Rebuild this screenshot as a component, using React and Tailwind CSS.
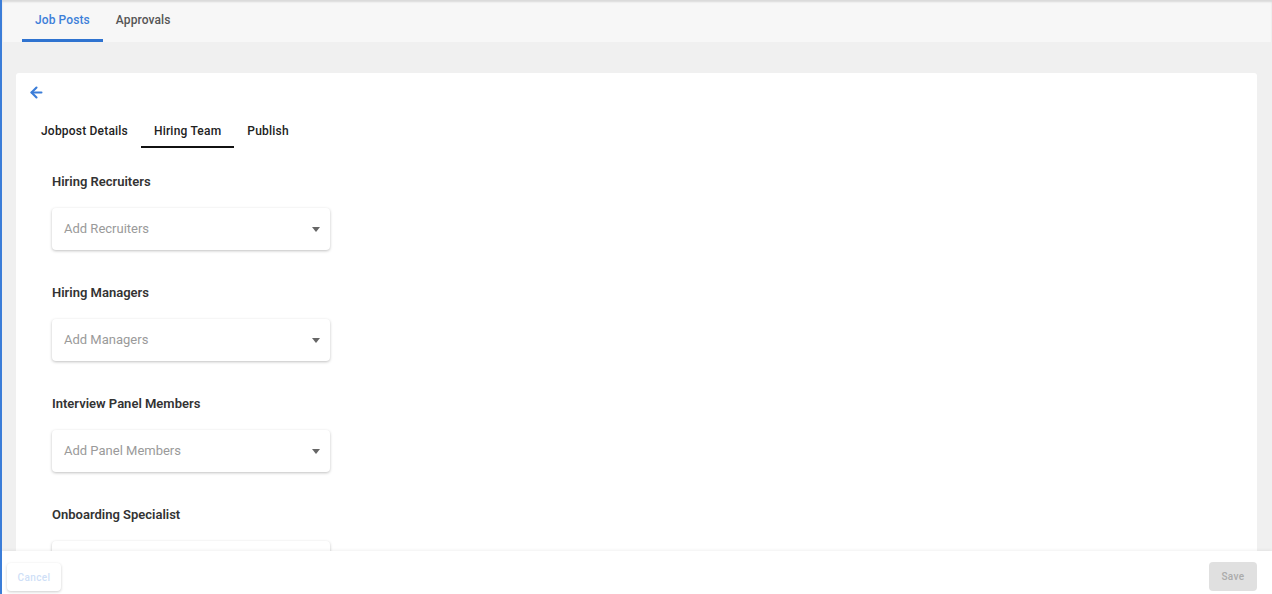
import { ArrowLeft } from "lucide-react";

const sections = [
  { label: "Hiring Recruiters", placeholder: "Add Recruiters" },
  { label: "Hiring Managers", placeholder: "Add Managers" },
  { label: "Interview Panel Members", placeholder: "Add Panel Members" },
  { label: "Onboarding Specialist", placeholder: "Add Specialist" },
];

const innerTabs = ["Jobpost Details", "Hiring Team", "Publish"];

const Caret = () => (
  <svg width="8" height="5" viewBox="0 0 8 5" className="shrink-0">
    <path d="M0 0h8L4 5z" fill="#666" />
  </svg>
);

const App = () => {
  return (
    <div className="h-[594px] w-full flex flex-col overflow-hidden border-l-2 border-[#3b7dd8] font-['Roboto',sans-serif]">
      {/* Top tabs */}
      <div className="h-[42px] shrink-0 bg-[#f7f7f7] flex pl-[20px] shadow-[inset_0_2px_2px_rgba(0,0,0,0.12)]">
        <div className="px-[13px] h-full flex items-center border-b-[3px] border-[#2f73d0] pt-[1px] text-[12px] font-medium tracking-[0.1px] text-[#3d7fd9]">
          Job Posts
        </div>
        <div className="px-[13px] h-full flex items-center border-b-[3px] border-transparent pt-[1px] text-[12px] font-medium tracking-[0.1px] text-[#555]">
          Approvals
        </div>
      </div>

      {/* Body */}
      <div className="flex-1 min-h-0 bg-[#f0f0f0] pt-[31px] pl-[14px] pr-[15px] overflow-hidden">
        <div className="bg-white rounded-t-[3px] h-full pl-[12px] pt-[11px]">
          <ArrowLeft className="w-[17px] h-[17px] text-[#3b7dd8]" strokeWidth={3} />
          <div className="flex mt-[11px]">
            {innerTabs.map((t) => (
              <div
                key={t}
                className={`px-[13px] h-[36px] pt-[4px] flex items-center border-b-2 text-[12px] font-medium tracking-[0.2px] text-[#222] ${
                  t === "Hiring Team" ? "border-[#111]" : "border-transparent"
                }`}
              >
                {t}
              </div>
            ))}
          </div>
          <div className="pl-[24px] pt-[25px]">
            {sections.map((s) => (
              <div key={s.label} className="mb-[34px]">
                <div className="h-[18px] leading-[18px] text-[13px] font-semibold text-[#333]">
                  {s.label}
                </div>
                <div className="mt-[17px] w-[278px] h-[42px] rounded-[4px] bg-white shadow-[0_1px_3px_rgba(0,0,0,0.25)] flex items-center justify-between pl-[12px] pr-[10px]">
                  <span className="text-[13px] text-[#9a9a9a]">{s.placeholder}</span>
                  <Caret />
                </div>
              </div>
            ))}
          </div>
        </div>
      </div>

      {/* Footer */}
      <div className="h-[43px] shrink-0 bg-white shadow-[0_-1px_3px_rgba(0,0,0,0.06)] flex items-end justify-between pl-[5px] pr-[15px] pb-[3px] relative z-10">
        <button className="h-[28px] w-[54px] rounded-[4px] bg-white shadow-[0_1px_3px_rgba(0,0,0,0.2)] text-[10px] font-medium tracking-[0.4px] text-[#cfdff7]">
          Cancel
        </button>
        <button className="h-[29px] w-[48px] rounded-[4px] bg-[#e0e0e0] text-[10px] font-medium tracking-[0.4px] text-[#ababab]">
          Save
        </button>
      </div>
    </div>
  );
};

export default App;
